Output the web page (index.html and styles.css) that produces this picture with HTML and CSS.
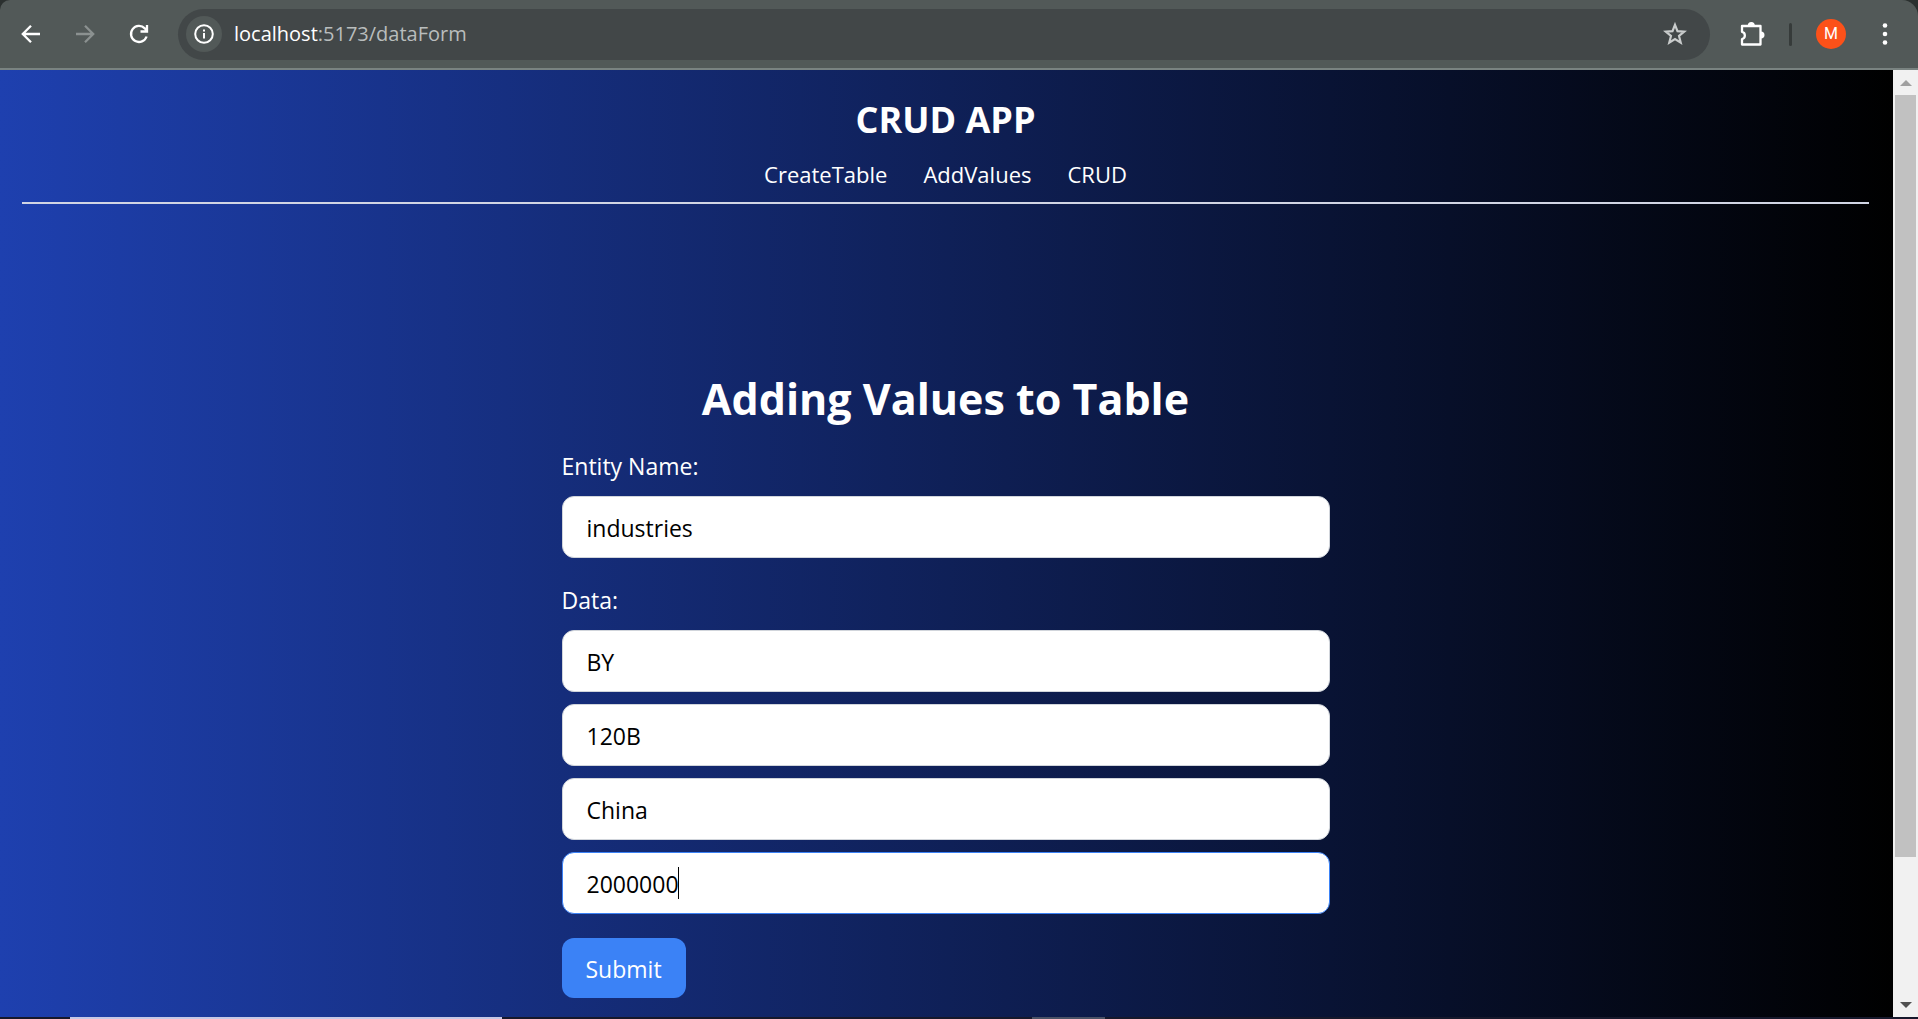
FILE: index.html
```html
<!DOCTYPE html>
<html lang="en">
<head>
<meta charset="utf-8">
<title>CRUD APP</title>
<link rel="stylesheet" href="styles.css">
</head>
<body>
<div class="window">
  <div class="toolbar">
    <div class="toolbar-nav">
      <button class="icon-button" type="button" aria-label="Back">
        <svg class="icon" viewBox="0 0 20 20"><path d="M19 10H2.500M10 1.800L1.800 10l8.200 8.200"/></svg>
      </button>
      <button class="icon-button icon-button-off" type="button" aria-label="Forward">
        <svg class="icon" viewBox="0 0 20 20"><path d="M1 10h16.500M10 1.800l8.200 8.200-8.200 8.200"/></svg>
      </button>
      <button class="icon-button" type="button" aria-label="Reload">
        <svg class="icon" viewBox="0 0 20 20"><path d="M17.600 12.500A8 8 0 1 1 15.800 4.400L17.500 6.500M18 1v6.500h-6.500"/></svg>
      </button>
    </div>
    <div class="address">
      <button class="site-info" type="button" aria-label="Site information">
        <svg class="icon" viewBox="0 0 20 20"><circle cx="10" cy="10" r="8.800"/><path d="M10 9v5.400M10 5.400v2"/></svg>
      </button>
      <span class="url"><span class="url-host">localhost</span>:5173/dataForm</span>
      <button class="bookmark" type="button" aria-label="Bookmark this page">
        <svg class="icon icon-star" viewBox="0 0 24 24"><path d="M12 3.500l2.300 5.900 6.200.4-4.800 4 1.600 6.200L12 16.700 6.700 20l1.600-6.200-4.800-4 6.200-.4z"/></svg>
      </button>
    </div>
    <div class="toolbar-actions">
      <button class="icon-button" type="button" aria-label="Extensions">
        <svg class="icon icon-puzzle" viewBox="0 0 26 26"><path d="M3 5h18.500v18.500H3v-5.500a3.700 3.700 0 0 0 0-7.200z"/><path class="solid" d="M8.800 4.500a3.500 3.500 0 0 1 7 0zM22 10.500a3.500 3.500 0 0 1 0 7z"/></svg>
      </button>
      <span class="divider"></span>
      <button class="avatar" type="button" aria-label="Profile M">M</button>
      <button class="icon-button" type="button" aria-label="Menu">
        <svg class="icon icon-menu" viewBox="0 0 6 24"><circle class="solid" cx="3" cy="3.500" r="2.300"/><circle class="solid" cx="3" cy="12" r="2.300"/><circle class="solid" cx="3" cy="20.500" r="2.300"/></svg>
      </button>
    </div>
  </div>

  <div class="viewport">
    <div class="page">
      <header class="site-header">
        <h1 class="site-title">CRUD APP</h1>
        <nav class="site-nav">
          <a href="#create">CreateTable</a>
          <a href="#add">AddValues</a>
          <a href="#crud">CRUD</a>
        </nav>
      </header>
      <main class="content">
        <h2 class="form-title">Adding Values to Table</h2>
        <form class="form">
          <div class="group">
            <label for="entity">Entity Name:</label>
            <input class="field" id="entity" type="text" value="industries">
          </div>
          <div class="group">
            <label for="data-1">Data:</label>
            <input class="field" id="data-1" type="text" value="BY">
            <input class="field" type="text" value="120B" aria-label="Data 2">
            <input class="field" type="text" value="China" aria-label="Data 3">
            <div class="field-wrap">
              <input class="field field-active" type="text" value="2000000" aria-label="Data 4">
              <span class="caret"></span>
            </div>
          </div>
          <button class="submit" type="submit">Submit</button>
        </form>
      </main>
    </div>
    <div class="scrollbar" aria-hidden="true">
      <span class="arrow arrow-up"></span>
      <span class="track"><span class="thumb"></span></span>
      <span class="arrow arrow-down"></span>
    </div>
  </div>
  <div class="taskbar"><span class="task task-light"></span><span class="task task-dim"></span></div>
</div>
</body>
</html>
```
FILE: styles.css
```css
* { box-sizing: border-box; }

body {
  margin: 0;
  background: #2b302f;
  color: #fff;
  font-family: "Open Sans", "Noto Sans", sans-serif;
  font-size: 23px;
  line-height: 36px;
}

button { border: 0; padding: 0; margin: 0; background: none; color: inherit; font: inherit; }

.window { display: flex; flex-direction: column; height: 100vh; overflow: hidden; }

/* Browser toolbar */
.toolbar {
  display: flex;
  align-items: center;
  flex: none;
  height: 70px;
  padding: 0 30px 0 21px;
  gap: 29px;
  background: #525958;
  border-bottom: 2px solid #7a8381;
  border-radius: 10px 16px 0 0;
}
.toolbar-nav { display: flex; gap: 34px; }
.icon-button { display: flex; }
.icon-button-off { color: #8b9190; }
.icon { display: block; width: 20px; height: 20px; fill: none; stroke: currentColor; stroke-width: 2.3; }
.icon .solid { fill: currentColor; stroke: none; }
.address {
  display: flex;
  align-items: center;
  flex: 1;
  height: 51px;
  padding: 0 22px 0 8px;
  border-radius: 26px;
  background: #424748;
}
.site-info {
  display: flex;
  align-items: center;
  justify-content: center;
  width: 36px;
  height: 36px;
  border-radius: 50%;
  background: #525958;
}
.site-info .icon { stroke-width: 2; }
.url { flex: 1; margin-left: 12px; font-size: 20px; color: #b9bdbd; }
.url-host { color: #fff; }
.bookmark { color: #c9cccc; }
.icon-star { width: 26px; height: 26px; stroke-width: 2; }
.toolbar-actions { display: flex; align-items: center; gap: 24px; }
.icon-puzzle { width: 26px; height: 26px; stroke-linejoin: round; }
.divider { width: 3px; height: 23px; border-radius: 2px; background: #363b3a; }
.avatar { width: 30px; height: 30px; margin-right: 12px; border-radius: 50%; background: #fc5119; font-family: Roboto, sans-serif; font-size: 16px; line-height: 30px; }
.icon-menu { width: 6px; height: 24px; }

/* Page */
.viewport { display: flex; flex: 1; min-height: 0; }
.page {
  flex: 1;
  padding: 26px 24px 0 22px;
  background: linear-gradient(to right, #1e40af, #000);
}
.site-header { padding-bottom: 10px; border-bottom: 2px solid #d1d5e4; text-align: center; }
.site-title { margin: 0 0 12px; font-size: 36px; line-height: 48px; }
.site-nav { display: flex; justify-content: center; gap: 36px; font-size: 22px; }
.site-nav a { color: inherit; text-decoration: none; }
.content { max-width: 768px; margin: 0 auto; padding-top: 168px; }
.form-title { margin: 0 0 22px; font-size: 43px; line-height: 54px; text-align: center; }
.form { display: flex; flex-direction: column; align-items: stretch; gap: 24px; }
.group { display: flex; flex-direction: column; gap: 12px; }
.field {
  display: block;
  width: 100%;
  height: 62px;
  padding: 2px 24px 0;
  border: 1px solid #d1d5db;
  border-radius: 12px;
  background: #fff;
  color: #000;
  font: inherit;
}
.field-active { border-color: #3b82f6; }
.field-wrap { position: relative; }
.caret { position: absolute; top: 15px; left: 116px; width: 1px; height: 32px; background: #000; }
.submit { align-self: flex-start; height: 60px; padding: 2px 24px 0; border-radius: 12px; background: #3b82f6; }

/* Scrollbar */
.scrollbar { display: flex; flex-direction: column; width: 25px; background: #f1f1f1; }
.arrow { height: 25px; display: flex; align-items: center; justify-content: center; }
.arrow::before { content: ""; border: 6px solid transparent; }
.arrow-up::before { border-top: 0; border-bottom-color: #a0a0a0; }
.arrow-down::before { border-bottom: 0; border-top-color: #505050; }
.track { flex: 1; padding: 0 2px; }
.thumb { display: block; height: 85%; background: #c1c1c1; }

/* Top edge of the desktop taskbar */
.taskbar { display: grid; grid-template-columns: 432px 73px; column-gap: 530px; flex: none; height: 2px; padding-left: 70px; background: #16182b; }
.task-light { background: #c6c8e6; }
.task-dim { background: #4a5266; }
```
